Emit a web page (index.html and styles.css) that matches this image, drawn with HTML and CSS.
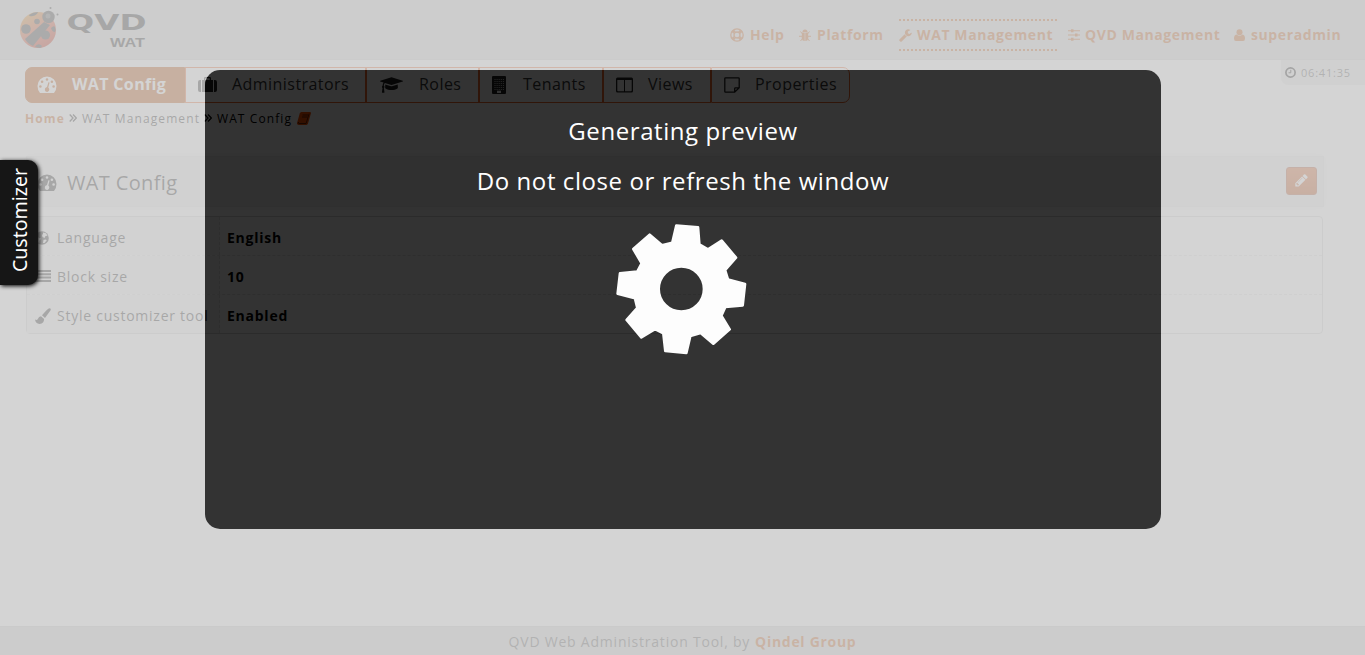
FILE: index.html
```html
<!DOCTYPE html>
<html lang="en">
<head>
<meta charset="utf-8">
<title>QVD WAT</title>
<link rel="stylesheet" href="styles.css">
</head>
<body>
<svg class="defs" width="0" height="0">
  <symbol id="dash" viewBox="0 0 20 18"><path fill-rule="evenodd" d="M3 17Q.5 14 .5 10A9.500 9.500 0 0 1 19.500 10Q19.500 14 17 17ZM4.700 10.500a1.300 1.300 0 1 0-2.600 0 1.300 1.300 0 0 0 2.600 0M6.400 5.800a1.300 1.300 0 1 0-2.600 0 1.300 1.300 0 0 0 2.600 0M11.300 3.500a1.300 1.300 0 1 0-2.600 0 1.300 1.300 0 0 0 2.600 0M16.200 5.800a1.300 1.300 0 1 0-2.600 0 1.300 1.300 0 0 0 2.600 0M17.900 10.500a1.300 1.300 0 1 0-2.600 0 1.300 1.300 0 0 0 2.600 0M11.400 6.200L10 11Q7.600 11.700 7.800 14q.5 2 2.500 1.900 2-.3 2-2.300 0-1.300-1-2.200l1.300-4.800z"/></symbol>
</svg>
<header class="top">
  <svg class="logo" width="130" height="46" viewBox="18 5 130 46">
    <defs><linearGradient id="shell" x1="0" y1="0" x2=".6" y2="1"><stop offset="0" stop-color="#e0a020"/><stop offset=".6" stop-color="#d85030"/><stop offset="1" stop-color="#c02008"/></linearGradient></defs>
    <circle cx="38" cy="30" r="18" fill="url(#shell)"/>
    <g fill="#333"><path d="M44 22L25 39q3 5 8 7L50 25z"/><circle cx="26" cy="29" r="4.800"/><circle cx="37" cy="21.500" r="2.800"/><circle cx="45.500" cy="35" r="4.600"/><path d="M29 15q4-3 9-3-1 3-5 4t-4-1M51 28q3-3 4-1 1 3 0 5-3 0-4-4M35 47q2-4 6-2 2 2-1 3z"/><circle cx="48.500" cy="17" r="6.200"/><circle cx="50.500" cy="8" r="1"/><circle cx="57.500" cy="14.500" r="1"/></g>
    <circle cx="48" cy="16" r="2.500" fill="#666"/>
    <text class="logo-qvd" x="66.500" y="30" textLength="80" lengthAdjust="spacingAndGlyphs">QVD</text>
    <text class="logo-wat" x="110" y="46.500" textLength="35" lengthAdjust="spacingAndGlyphs">WAT</text>
  </svg>
  <nav class="menu">
    <a class="m-help"><svg class="line" width="14" height="14" viewBox="0 0 14 14"><circle cx="7" cy="7" r="6.200" stroke-width="1.300"/><circle cx="7" cy="7" r="3" stroke-width="1.300"/><path stroke-width="3.200" d="M2.600 2.600l2 2M9.400 9.400l2 2M11.400 2.600l-2 2M4.600 9.400l-2 2"/></svg><span>Help</span></a>
    <a class="m-platform"><svg width="12" height="13" viewBox="0 0 12 13"><path d="M3.500 3a2.500 2.500 0 0 1 5 0zM3 3.600h2.700V12Q3.300 12 2.700 9.500zM6.300 3.600H9l.3 5.900Q8.700 12 6.300 12z"/><path class="line" d="M1.500 2.500l2 2.500M0 7.300h3M9 7.300h3M10.500 2.500l-2 2.500M1.500 12l2-2.500M10.500 12l-2-2.500"/></svg><span>Platform</span></a>
    <a class="m-wat active"><svg width="13" height="13" viewBox="60 90 1700 1700"><path d="M1092 1052l-682 682q-37 37-90 37-52 0-91-37L123 1628q-38-36-38-90 0-53 38-91l681-681q39 98 114.500 173.500T1092 1052zm634-435q0 39-23 106-47 134-164.500 217.500T1280 1024q-185 0-316.500-131.500T832 576t131.500-316.500T1280 128q58 0 121.500 16.500T1509 191q16 11 16 28t-16 28L1216 416v224l193 107q5-3 79-48.500t135.500-81T1694 582q15 0 23.500 10t8.500 25z"/></svg><span>WAT Management</span></a>
    <a class="m-qvd"><svg width="12" height="12" viewBox="0 0 12 12"><path d="M0 1.300h12v1H0zM0 5.500h12v1H0zM0 9.700h12v1H0zM3 .3h2.500v3H3zM7 4.500h2.500v3H7zM3 8.700h2.500v3H3z"/></svg><span>QVD Management</span></a>
    <a class="m-user"><svg width="11" height="12" viewBox="0 0 11 12"><circle cx="5.500" cy="3.200" r="3"/><path d="M2.500 5.500Q5.500 8 8.500 5.500 11 6 11 9.500 11 12 9 12H2Q0 12 0 9.500 0 6 2.500 5.500"/></svg><span>superadmin</span></a>
  </nav>
</header>
<main>
  <div class="subhead">
    <div class="tabs">
      <a class="t1 on"><svg width="20" height="18"><use href="#dash"/></svg><span>WAT Config</span></a>
      <a class="t2"><svg width="19" height="16" viewBox="0 0 19 16"><path fill-rule="evenodd" d="M0 5q0-2 2-2h1v12H2q-2 0-2-2zM4 3h2V1.200Q6 0 7.200 0h4.600Q13 0 13 1.200V3h2v12H4zM7.300 3h4.400V1.300H7.300zM16 3h1q2 0 2 2v8q0 2-2 2h-1z"/></svg><span>Administrators</span></a>
      <a class="t3"><svg width="23" height="18" viewBox="0 0 2304 1792"><path d="M1774 836l18 316q4 69-82 128t-235 93.500-323 34.500-323-34.500T594 1280t-82-128l18-316 574 181q22 7 48 7t48-7zm530-324q0 23-22 31L1162 895q-4 1-10 1t-10-1L490 689q-43 34-71 111.500T385 979q63 36 63 109 0 69-58 107l58 433q2 14-8 25-9 11-24 11H224q-15 0-24-11-10-11-8-25l58-433q-58-38-58-107 0-73 65-111 11-207 98-330L22 543q-22-8-22-31t22-31l1120-352q4-1 10-1t10 1l1120 352q22 8 22 31z"/></svg><span>Roles</span></a>
      <a class="t4"><svg width="14" height="18" viewBox="0 0 14 18"><path d="M0 1Q0 0 1 0h12q1 0 1 1v16q0 1-1 1H1q-1 0-1-1z"/><path stroke="#fff" stroke-opacity=".75" stroke-dasharray="1 1.100" d="M2.500 3.500h9.500M2.500 5.500h9.500M2.500 7.500h9.500M2.500 9.500h9.500M2.500 11.500h9.500M2.500 13.500h9.500"/><path fill="#fff" d="M5 14.700h4V17H5z"/></svg><span>Tenants</span></a>
      <a class="t5"><svg width="18" height="16" viewBox="0 0 18 16"><path fill-rule="evenodd" d="M0 2Q0 .5 1.500.5h14Q17 .500 17 2v12q0 1.500-1.500 1.500h-14Q0 15.500 0 14zM1.300 3v10.500q0 .8.8.8H8V3zM9 3v11.300h5.900q.8 0 .8-.8V3z"/></svg><span>Views</span></a>
      <a class="t6"><svg class="line" width="16" height="16" viewBox="0 0 16 16" stroke-width="1.300"><path d="M1.500.8h13q.7 0 .7.700v9.300L10.700 15.200H1.500q-.7 0-.7-.7v-13q0-.7.7-.7zM15 10.800h-3.600q-.7 0-.7.700V15"/></svg><span>Properties</span></a>
    </div>
    <div class="clock"><svg class="line" width="11" height="11" viewBox="0 0 11 11" stroke-width="1.700"><circle cx="5.500" cy="5.500" r="4.600"/><path stroke-width="1" d="M5.800 2.800v3H3.500"/></svg><span>06:41:35</span></div>
  </div>
  <div class="crumbs"><b>Home</b><svg class="c1" width="8" height="8" viewBox="0 0 8 8"><path d="M.7.500L4 4 .7 7.500M4 .5L7.300 4 4 7.500"/></svg><span class="c2">WAT Management</span><svg class="c3" width="8" height="8" viewBox="0 0 8 8"><path d="M.7.500L4 4 .7 7.500M4 .5L7.300 4 4 7.500"/></svg><span class="c4">WAT Config</span><svg class="book" width="14" height="13" viewBox="0 0 14 13"><path d="M4.500 0H13q1.200.3.900 1.400L11 11.600Q10.600 13 9.300 13H1.800Q0 13 0 11.200L2.700 1.500Q3.200 0 4.500 0"/><path class="pages" d="M5.500 3h5.500M5 5h5.500M1.500 10q-.6 1.500.6 1.500h7l3-9.700"/></svg></div>
  <section class="title"><svg width="20" height="18"><use href="#dash"/></svg><h1>WAT Config</h1><a class="edit"><svg width="13" height="13" viewBox="90 120 1600 1600"><path fill-rule="evenodd" d="M491 1536l91-91-235-235-91 91v107h128v128h107zM1014 608q0-22-22-22-10 0-17 7l-542 542q-7 7-7 17 0 22 22 22 10 0 17-7l542-542q7-7 7-17zM960 416l416 416-832 832H128v-416zM1643 512q0 53-37 90l-166 166-416-416 166-165q36-38 90-38 53 0 91 38l235 234q37 39 37 91z"/></svg></a></section>
  <div class="details">
    <div class="row"><div class="key"><svg width="14" height="14" viewBox="0 0 14 14"><circle cx="7" cy="7" r="6.800"/><path fill="#f0f0f0" d="M8 1.500l3 .8 1.500 2.500-2 .2-1 2-2-1-.5-2 1-1zM1.500 5l2.500 2 2 .5-1.500 2.200-.3 2.500Q1 10 1.500 5M8.500 9l2-.5 1.300.8L9.500 12H8z"/></svg><span>Language</span></div><div class="val">English</div></div>
    <div class="row"><div class="key"><svg width="16" height="14" viewBox="0 0 16 14"><path d="M0 0h16v2H0zM0 3.300h16v2H0zM0 6.600h16v2H0zM0 10h16v2H0z"/></svg><span>Block size</span></div><div class="val">10</div></div>
    <div class="row"><div class="key"><svg width="16" height="16" viewBox="0 0 16 16"><path d="M14.300.200Q16.300.400 15.600 2.200L10 10 7 7.300q5-6 7.300-7.100M6 8.200l3.100 2.700q0 4.500-4.500 5Q.8 16 0 11.600q2 1 2.800-.7Q3.800 8.200 6 8.200"/></svg><span>Style customizer tool</span></div><div class="val">Enabled</div></div>
  </div>
</main>
<footer><span>QVD Web Administration Tool, by</span><b>Qindel Group</b></footer>
<div class="modal">
  <p>Generating preview</p>
  <p>Do not close or refresh the window</p>
  <svg class="gear" width="160" height="160" viewBox="0 0 480 480"><path fill-rule="evenodd" d="M229 47L294 52 298 103 324 118 365 92 408 143 375 180 384 209 435 222 428 286 376 291 364 317 389 358 340 401 302 369 271 378 259 429 196 423 190 370 165 357 124 382 80 330 112 294 105 265 53 251 60 190 112 185 125 160 100 117 149 74 186 106 217 98ZM312 237a68 68 0 1 0-136 0 68 68 0 0 0 136 0Z"/></svg>
</div>
<aside class="customizer"><span>Customizer</span></aside>
</body>
</html>
```
FILE: styles.css
```css
* { box-sizing: border-box; }
body { margin: 0; height: 655px; overflow: hidden; display: flex; flex-direction: column; background: #fff; color: #222; font-family: "Open Sans", "Noto Sans", sans-serif; font-size: 14px; letter-spacing: 1px; white-space: nowrap; }
svg { fill: currentColor; flex: none; display: block; }
.line { fill: none; stroke: currentColor; }
.defs { position: absolute; }
h1, p { margin: 0; font-weight: 400; }
.top { height: 60px; background: #d9d9d9; border-bottom: 1px solid #d0d0d0; display: flex; justify-content: space-between; padding: 5px 24px 0 18px; }
.logo-qvd { font: bold 20.500px "DejaVu Sans", sans-serif; letter-spacing: 0; fill: #222; }
.logo-wat { font: bold 13.500px "Liberation Sans", sans-serif; letter-spacing: 0; fill: #222; }
.menu { display: flex; padding-top: 14px; color: #c65a10; font-weight: 700; font-size: 14px; letter-spacing: .6px; }
.menu a { display: flex; align-items: center; height: 32px; }
.menu span { padding-bottom: 2px; }
.m-help { width: 69px; gap: 6px; }
.m-platform { width: 100px; gap: 6px; }
.m-wat { width: 158px; gap: 5px; margin-right: 11px; }
.m-qvd { width: 166px; gap: 5px; }
.m-user { width: 107px; gap: 6px; }
.menu .active { border-top: 2px dotted; border-bottom: 2px dotted; }
main { flex: 1; }
.subhead { display: flex; justify-content: space-between; padding: 0 0 0 25px; }
.tabs { display: flex; height: 36px; margin-top: 7px; font-size: 16px; letter-spacing: .45px; }
.tabs a { display: flex; align-items: center; border: 1px solid #f06a30; padding: 0 0 1px 11px; color: #383838; }
.tabs span { padding-bottom: 2px; }
.tabs .on { background: #bc4c00; border-color: #bc4c00; color: #fff; font-weight: 700; border-radius: 7px 0 0 7px; letter-spacing: .35px; }
.t1 { width: 160px; gap: 15px; }
.t2 { width: 181px; gap: 15px; }
.tabs .t2 { padding-left: 12px; }
.tabs .t3 { width: 113px; gap: 16px; padding-left: 13px; }
.tabs .t4 { width: 124px; gap: 17px; padding-left: 12px; }
.tabs .t5 { width: 108px; gap: 14px; padding-left: 12px; }
.tabs .t6 { width: 139px; gap: 15px; padding-left: 12px; border-radius: 0 7px 7px 0; }
.tabs svg { color: #222; }
.tabs .on svg { color: #fff; }
.clock { width: 84px; height: 25px; background: #ececec; border-radius: 0 0 0 7px; display: flex; align-items: center; gap: 5px; padding-left: 4px; font-size: 11px; letter-spacing: .8px; color: #555; }
.clock svg { color: #111; }
.crumbs { display: flex; align-items: center; height: 18px; margin: 6px 0 0 25px; font-size: 12px; letter-spacing: 1.100px; }
.crumbs b { width: 44px; color: #c65a10; }
.c1, .c3 { fill: none; stroke: currentColor; stroke-width: 1.300; }
.c2 { width: 117px; margin-left: 5px; }
.c3 { margin-left: 5px; color: #000; }
.c4 { width: 76px; margin-left: 5px; color: #000; }
.book { margin-left: 4px; color: #ff5000; }
.pages { fill: none; stroke: #501800; stroke-width: .8; }
.title { display: flex; align-items: center; height: 51px; margin: 29px 41px 0 26px; background: #f0f0f0; border: 1px solid #e8e8e8; padding: 0 6px 0 10px; box-shadow: 0 0 7px #f0f0f0; }
.title > svg { margin-top: 2px; }
.title h1 { font-size: 20px; margin-left: 10px; line-height: 51px; flex: 1; letter-spacing: .35px; padding-top: 1px; }
.edit { width: 31px; height: 28px; border: 1px solid #b3522a; border-radius: 3px; background: linear-gradient(#df6628, #c24b0c); color: #fff; display: flex; align-items: center; justify-content: center; margin-bottom: 2px; }
.details { margin: 9px 42px 0 26px; border: 1px solid #d4d4d4; border-radius: 4px; height: 118px; }
.row { display: flex; height: 39px; border-bottom: 1px dashed #e4e4e4; }
.row:last-child { border: 0; height: 38px; }
.key { width: 193px; background: #f2f2f2; border-right: 1px dashed #e0e0e0; display: flex; align-items: center; padding: 3px 0 0 8px; font-size: 14px; letter-spacing: .75px; }
.key svg { margin-right: 6px; }
.key svg[width="14"] { margin-right: 8px; }
.key span { line-height: 18px; }
.val { padding: 4px 0 0 7px; line-height: 34px; font-weight: 700; color: #000; font-size: 14px; letter-spacing: .75px; }
footer { height: 29px; display: flex; justify-content: center; align-items: center; gap: 5px; background: #d6d6d6; border-top: 1px solid #cacaca; color: #555; font-size: 14px; letter-spacing: .78px; }
footer b { color: #c65a10; letter-spacing: .7px; }
.modal { position: absolute; left: 205px; top: 70px; width: 956px; height: 459px; border-radius: 15px; background: rgba(0,0,0,.8); box-shadow: 0 0 0 1400px rgba(201,201,201,.8); color: #fff; font-size: 24px; letter-spacing: .58px; text-align: center; padding-top: 36px; display: flex; flex-direction: column; align-items: center; }
.modal p { line-height: 50px; height: 50px; }
.gear { margin: 4px 0 0 -6px; fill: #fdfdfd; stroke: #fdfdfd; stroke-width: 8; stroke-linejoin: round; }
.customizer { position: absolute; left: 0; top: 160px; width: 38px; height: 125px; background: #161616; color: #fff; border-radius: 0 10px 10px 0; box-shadow: 1px 1px 4px #000; display: flex; align-items: center; justify-content: center; font: 19.500px "Noto Sans", sans-serif; letter-spacing: 0; padding: 0 0 4px; }
.customizer span { writing-mode: vertical-rl; transform: rotate(180deg); }
```
